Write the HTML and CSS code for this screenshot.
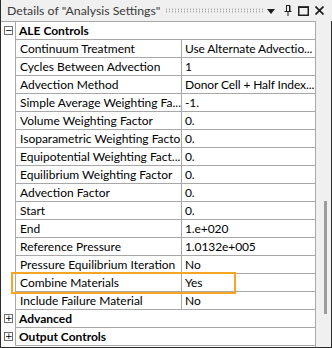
FILE: index.html
```html
<!DOCTYPE html>
<html>
<head>
<meta charset="utf-8">
<link rel="stylesheet" href="styles.css">
</head>
<body>
<div class="window">
  <div class="titlebar">
    <span class="title">Details of "Analysis Settings"</span>
    <span class="grip"></span>
    <span class="tb-icons">
      <svg class="ic-drop" width="8" height="5" viewBox="0 0 8 5"><path d="M0 0H8L4 5Z" fill="#1e1e1e"/></svg>
      <svg class="ic-pin" width="8" height="11" viewBox="0 0 8 11"><path d="M2 0.5H6M2.5 0.5V6.5M5.5 0.5V6.5M0.5 6.5H7.5M4 6.5V11" stroke="#1e1e1e" stroke-width="1" fill="none"/><rect x="5" y="0.5" width="1.5" height="6" fill="#1e1e1e"/></svg>
      <svg class="ic-max" width="11" height="10" viewBox="0 0 11 10"><rect x="0.75" y="1" width="9.5" height="8.25" fill="none" stroke="#1e1e1e" stroke-width="1.5"/><rect x="0" y="0.5" width="11" height="1.5" fill="#1e1e1e"/></svg>
      <svg class="ic-close" width="9" height="9" viewBox="0 0 9 9"><path d="M0.5 0.5L8.5 8.5M8.5 0.5L0.5 8.5" stroke="#1e1e1e" stroke-width="1.7"/></svg>
    </span>
  </div>
  <div class="body">
    <div class="grid">
      <div class="row header">
        <div class="gutter"><span class="box">−</span></div>
        <div class="cells"><div class="hcell">ALE Controls</div></div>
      </div>
      <div class="row"><div class="gutter"></div><div class="cells"><div class="name">Continuum Treatment</div><div class="value">Use Alternate Advectio...</div></div></div>
      <div class="row"><div class="gutter"></div><div class="cells"><div class="name">Cycles Between Advection</div><div class="value">1</div></div></div>
      <div class="row"><div class="gutter"></div><div class="cells"><div class="name">Advection Method</div><div class="value">Donor Cell + Half Index...</div></div></div>
      <div class="row"><div class="gutter"></div><div class="cells"><div class="name">Simple Average Weighting Fa...</div><div class="value">-1.</div></div></div>
      <div class="row"><div class="gutter"></div><div class="cells"><div class="name">Volume Weighting Factor</div><div class="value">0.</div></div></div>
      <div class="row"><div class="gutter"></div><div class="cells"><div class="name">Isoparametric Weighting Factor</div><div class="value">0.</div></div></div>
      <div class="row"><div class="gutter"></div><div class="cells"><div class="name">Equipotential Weighting Fact...</div><div class="value">0.</div></div></div>
      <div class="row"><div class="gutter"></div><div class="cells"><div class="name">Equilibrium Weighting Factor</div><div class="value">0.</div></div></div>
      <div class="row"><div class="gutter"></div><div class="cells"><div class="name">Advection Factor</div><div class="value">0.</div></div></div>
      <div class="row"><div class="gutter"></div><div class="cells"><div class="name">Start</div><div class="value">0.</div></div></div>
      <div class="row"><div class="gutter"></div><div class="cells"><div class="name">End</div><div class="value">1.e+020</div></div></div>
      <div class="row"><div class="gutter"></div><div class="cells"><div class="name">Reference Pressure</div><div class="value">1.0132e+005</div></div></div>
      <div class="row"><div class="gutter"></div><div class="cells"><div class="name">Pressure Equilibrium Iteration</div><div class="value">No</div></div></div>
      <div class="row"><div class="gutter"></div><div class="cells"><div class="name">Combine Materials</div><div class="value">Yes</div></div></div>
      <div class="row"><div class="gutter"></div><div class="cells"><div class="name">Include Failure Material</div><div class="value">No</div></div></div>
      <div class="row header">
        <div class="gutter"><span class="box">+</span></div>
        <div class="cells"><div class="hcell">Advanced</div></div>
      </div>
      <div class="row header">
        <div class="gutter"><span class="box">+</span></div>
        <div class="cells"><div class="hcell">Output Controls</div></div>
      </div>
    </div>
    <div class="scrollbar"><div class="thumb"></div></div>
  </div>
  <div class="highlight"></div>
</div>
</body>
</html>
```

FILE: styles.css
```css
* { box-sizing: border-box; }
html, body { margin: 0; padding: 0; background: #fff; }
body {
  font-family: Lato, "Noto Sans", sans-serif;
  font-size: 12px;
  color: #000;
}
.window {
  position: relative;
  width: 332px;
  height: 348px;
  border-left: 1px solid #2b2b2b;
  border-bottom: 1px solid #2b2b2b;
  background: #f0f0f0;
}
.titlebar {
  height: 21px;
  display: flex;
  align-items: center;
  padding-left: 6px;
  padding-right: 8px;
}
.title {
  color: #3a3a3a;
  white-space: nowrap;
  line-height: 21px;
  font-size: 12.3px;
}
.grip {
  flex: 1;
  margin-left: 5px;
  margin-right: 2px;
  height: 5px;
  background-image: radial-gradient(circle, #9a9a9a 0.7px, transparent 0.9px);
  background-size: 3px 2.5px;
}
.tb-icons {
  display: flex;
  align-items: center;
}
.ic-drop { margin-top: 1px; }
.ic-pin { margin-left: 9px; }
.ic-max { margin-left: 6px; }
.ic-close { margin-left: 6px; }
.body {
  display: flex;
  height: 326px;
  border-right: 1px solid #2b2b2b;
}
.grid {
  width: 315px;
  height: 326px;
  background: #fff;
  border-top: 1px solid #a8a8a8;
  border-right: 1px solid #a8a8a8;
}
.row {
  display: flex;
  height: 18px;
}
.gutter {
  width: 15px;
  border-right: 1px solid #a8a8a8;
  display: flex;
  align-items: center;
  padding-left: 3px;
}
.box {
  width: 9px;
  height: 9px;
  border: 1px solid #6e6e6e;
  font-size: 9px;
  line-height: 7px;
  text-align: center;
  font-family: "DejaVu Sans", sans-serif;
  color: #000;
  margin-top: -1px;
}
.cells {
  flex: 1;
  display: flex;
  border-bottom: 1px solid #a8a8a8;
  min-width: 0;
}
.name, .value, .hcell {
  white-space: nowrap;
  overflow: hidden;
  line-height: 17px;
}
.name {
  width: 166px;
  flex: none;
  border-right: 1px solid #a8a8a8;
  padding-left: 4px;
}
.value {
  flex: 1;
  min-width: 0;
  padding-left: 3px;
  letter-spacing: -0.1px;
}
.hcell {
  font-weight: bold;
  padding-left: 3px;
}
.scrollbar {
  flex: 1;
  background: #f0f0f0;
  padding-left: 8px;
}
.thumb {
  margin-top: 180px;
  width: 3px;
  height: 113px;
  background: #9c9c9c;
}
.highlight {
  position: absolute;
  left: 10px;
  top: 272px;
  width: 225px;
  height: 22px;
  border: 2px solid #f5a623;
}
```
